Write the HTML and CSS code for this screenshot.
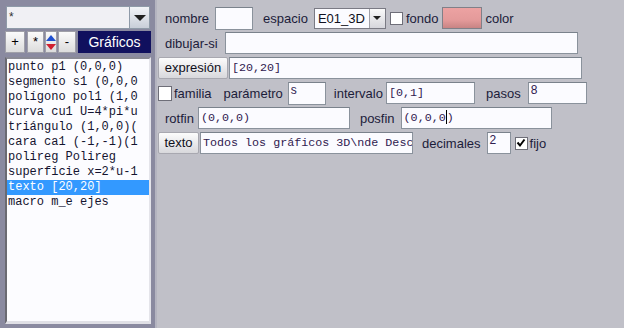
FILE: index.html
```html
<!DOCTYPE html>
<html lang="es">
<head>
    <meta charset="UTF-8">
    <title>Gráficos</title>
    <link rel="stylesheet" href="styles.css">
</head>
<body>
<div class="app">
    <div class="side">
        <div class="combo">
            <div class="combo-text">*</div>
            <div class="combo-btn"><span class="tri"></span></div>
        </div>
        <div class="tools">
            <div class="tool plus">+</div>
            <div class="tool star">*</div>
            <div class="updown"><span class="up"></span><span class="down"></span></div>
            <div class="tool minus">-</div>
            <div class="graficos">Gráficos</div>
        </div>
        <div class="list">
            <div class="item">punto p1 (0,0,0)</div>
            <div class="item">segmento s1 (0,0,0</div>
            <div class="item">polígono pol1 (1,0</div>
            <div class="item">curva cu1 U=4*pi*u</div>
            <div class="item">triángulo (1,0,0)(</div>
            <div class="item">cara ca1 (-1,-1)(1</div>
            <div class="item">polireg Polireg</div>
            <div class="item">superficie x=2*u-1</div>
            <div class="item selected">texto [20,20]</div>
            <div class="item">macro m_e ejes</div>
        </div>
    </div>

    <div class="main">
        <div class="row">
            <span class="label nombre">nombre</span>
            <div class="field f-nombre"></div>
            <span class="label espacio">espacio</span>
            <div class="select">
                <span class="select-text">E01_3D</span>
                <span class="select-btn"><span class="tri small"></span></span>
            </div>
            <span class="check c-fondo"></span>
            <span class="label fondo">fondo</span>
            <div class="swatch"></div>
            <span class="label color">color</span>
        </div>

        <div class="row">
            <span class="label nombre">dibujar-si</span>
            <div class="field f-dibujar"></div>
        </div>

        <div class="row">
            <div class="btn b-expresion">expresión</div>
            <div class="field mono f-expresion">[20,20]</div>
        </div>

        <div class="row">
            <span class="check c-familia"></span>
            <span class="label familia">familia</span>
            <span class="label parametro">parámetro</span>
            <div class="field small f-param">s</div>
            <span class="label intervalo">intervalo</span>
            <div class="field mono f-intervalo">[0,1]</div>
            <span class="label pasos">pasos</span>
            <div class="field small f-pasos">8</div>
        </div>

        <div class="row">
            <span class="label nombre">rotfin</span>
            <div class="field mono f-rotfin">(0,0,0)</div>
            <span class="label posfin">posfin</span>
            <div class="field mono f-posfin">(0,0,0<span class="caret"></span>)</div>
        </div>

        <div class="row">
            <div class="btn b-texto">texto</div>
            <div class="field mono f-texto">Todos los gráficos 3D\nde Desc</div>
            <span class="label decimales">decimales</span>
            <div class="field small f-dec">2</div>
            <span class="check checked c-fijo">
                <svg width="10" height="10" viewBox="0 0 10 10"><path d="M1.5 4.5 L4 7.5 L8.5 1.5" fill="none" stroke="#000" stroke-width="2"/></svg>
            </span>
            <span class="label fijo">fijo</span>
        </div>
    </div>
</div>
</body>
</html>
```

FILE: styles.css
```css
body {
    margin: 0;
    font-family: 'Liberation Sans', Arial, sans-serif;
    font-size: 13px;
    color: #1c1c3a;
    background: #c0c0c8;
    overflow: hidden;
}

.app {
    display: flex;
    height: 328px;
}

/* left panel */

.side {
    width: 150px;
    flex: none;
    background: #8a8aa0;
    padding: 6px 0 0 5px;
    display: flex;
    flex-direction: column;
}

.combo {
    display: flex;
    height: 23px;
    margin-left: 1px;
    width: 144px;
}

.combo-text {
    flex: 1;
    background: #f0f0f4;
    border: 1px solid #8e9aa8;
    padding-left: 2px;
    line-height: 20px;
    font-size: 12px;
    color: #303030;
}

.combo-btn {
    width: 19px;
    background: linear-gradient(#f2f4f8, #c8ced8);
    border: 1px solid #8e9aa8;
    border-left: none;
    display: flex;
    align-items: center;
    justify-content: center;
}

.tri {
    width: 0;
    height: 0;
    border-left: 6px solid transparent;
    border-right: 6px solid transparent;
    border-top: 6px solid #202020;
}

.tri.small {
    border-left-width: 4px;
    border-right-width: 4px;
    border-top-width: 4px;
}

.tools {
    display: flex;
    height: 22px;
    margin-top: 2px;
}

.tool {
    width: 18px;
    height: 20px;
    border: 1px solid #a0a0a8;
    background: linear-gradient(#fbfbfb, #dcdcdc);
    text-align: center;
    line-height: 20px;
    color: #000;
    font-size: 13px;
}

.star { margin-left: 2px; width: 15px; }
.minus { margin-left: 1px; width: 16px; }

.updown {
    width: 12px;
    margin-left: 1px;
    display: flex;
    flex-direction: column;
    background: linear-gradient(#fbfbfb, #dcdcdc);
    border: 1px solid #a0a0a8;
    box-sizing: border-box;
    height: 22px;
    align-items: center;
    justify-content: center;
    gap: 3px;
}

.up {
    border-left: 5px solid transparent;
    border-right: 5px solid transparent;
    border-bottom: 6px solid #2050d0;
}

.down {
    border-left: 5px solid transparent;
    border-right: 5px solid transparent;
    border-top: 6px solid #d02030;
}

.graficos {
    margin-left: 2px;
    width: 73px;
    height: 22px;
    background: #10105e;
    color: #fff;
    font-size: 14px;
    line-height: 22px;
    text-align: center;
}

.list {
    margin-top: 4px;
    width: 142px;
    height: 261px;
    background: #fcfcff;
    border-left: 2px solid #6a6a72;
    border-top: 2px solid #8a8a94;
    border-right: 2px solid #e4e4ea;
    border-bottom: 3px solid #e0e0e6;
    padding-top: 1px;
}

.item {
    font-family: 'Liberation Mono', 'Courier New', monospace;
    font-size: 12px;
    height: 15px;
    line-height: 15px;
    padding-left: 1px;
    color: #141430;
    white-space: nowrap;
    overflow: hidden;
}

.item.selected {
    background: #3399ff;
    color: #fff;
}

/* right panel */

.main {
    flex: 1;
    padding: 7px 0 0 0;
    display: flex;
    flex-direction: column;
    gap: 3px;
    border-left: 2px solid #b4b4c0;
}

.row {
    display: flex;
    align-items: center;
    height: 22px;
}

.label {
    white-space: nowrap;
}

.nombre { margin-left: 8px; }
.espacio { margin-left: 10px; }
.fondo { margin-left: 3px; }
.color { margin-left: 3px; }
.familia { margin-left: 2px; }
.parametro { margin-left: 12px; }
.intervalo { margin-left: 8px; }
.pasos { margin-left: 11px; }
.posfin { margin-left: 10px; }
.decimales { margin-left: 9px; }
.fijo { margin-left: 2px; }

.field {
    box-sizing: border-box;
    height: 22px;
    background: #fbfbff;
    border: 1px solid #8a929c;
    border-top-color: #7a828c;
    padding: 0 2px;
    line-height: 20px;
    white-space: nowrap;
    overflow: hidden;
}

.field.mono {
    font-family: 'Liberation Mono', 'Courier New', monospace;
    font-size: 11.7px;
    color: #302050;
}

.field.small {
    font-size: 12px;
    line-height: 14px;
    color: #302050;
}

.f-nombre { width: 38px; margin-left: 6px; height: 23px; }
.f-dibujar { width: 353px; margin-left: 7px; }
.f-expresion { width: 353px; margin-left: 1px; }
.f-param { width: 38px; margin-left: 5px; height: 23px; }
.f-intervalo { width: 89px; margin-left: 3px; }
.f-pasos { width: 59px; margin-left: 7px; }
.f-rotfin { width: 152px; margin-left: 4px; }
.f-posfin { width: 151px; margin-left: 6px; }
.f-texto { width: 213px; margin-left: 1px; }
.f-dec { width: 24px; margin-left: 6px; }

.caret {
    display: inline-block;
    width: 1px;
    height: 14px;
    background: #000;
    vertical-align: -3px;
}

.select {
    display: flex;
    width: 72px;
    height: 21px;
    margin-left: 6px;
    box-sizing: border-box;
    border: 1px solid #7a7a84;
    background: #fbfbff;
}

.select-text {
    flex: 1;
    padding-left: 3px;
    line-height: 19px;
    font-size: 13px;
    color: #101020;
}

.select-btn {
    width: 15px;
    border-left: 1px solid #a0a0a8;
    background: linear-gradient(#fafafa, #d6d6dc);
    display: flex;
    align-items: center;
    justify-content: center;
}

.check {
    box-sizing: border-box;
    width: 13px;
    height: 13px;
    background: #fff;
    border: 1px solid #6e6e78;
    display: flex;
    align-items: center;
    justify-content: center;
}

.c-fondo { margin-left: 4px; }
.c-familia { margin-left: 1px; width: 14px; height: 15px; }
.c-fijo { margin-left: 4px; }

.swatch {
    width: 40px;
    height: 22px;
    margin-left: 4px;
    box-sizing: border-box;
    border: 1px solid #808088;
    background: linear-gradient(#eca2a2, #e49a9a 60%, #c88484);
}

.btn {
    box-sizing: border-box;
    height: 22px;
    border: 1px solid #a8a8b0;
    border-radius: 2px;
    background: linear-gradient(#fcfcfc, #d8d8dc);
    text-align: center;
    line-height: 20px;
    color: #101020;
    margin-left: 1px;
}

.b-expresion { width: 70px; }
.b-texto { width: 41px; }
```
